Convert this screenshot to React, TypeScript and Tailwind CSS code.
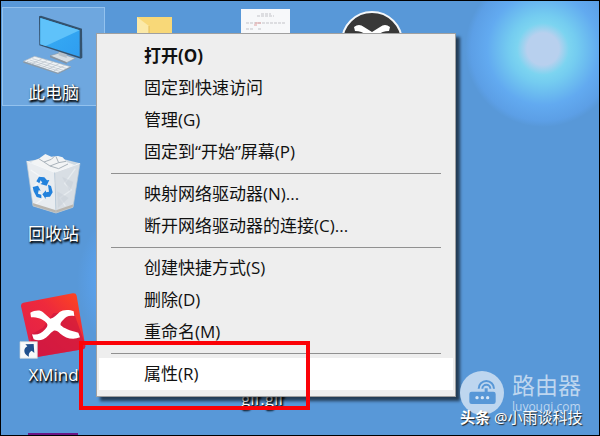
import type { ReactNode } from "react";

interface DesktopIconProps {
  label: string;
  selected?: boolean;
  children: ReactNode;
}

interface MenuItem {
  label: string;
  bold?: boolean;
  active?: boolean;
}

const menuGroups: MenuItem[][] = [
  [
    { label: "打开(O)", bold: true },
    { label: "固定到快速访问" },
    { label: "管理(G)" },
    { label: "固定到“开始”屏幕(P)" },
  ],
  [{ label: "映射网络驱动器(N)..." }, { label: "断开网络驱动器的连接(C)..." }],
  [{ label: "创建快捷方式(S)" }, { label: "删除(D)" }, { label: "重命名(M)" }],
  [{ label: "属性(R)", active: true }],
];

const ComputerIcon = () => (
  <svg viewBox="54 33 216 210" className="h-[70px] w-[72px]" aria-hidden="true">
    <defs>
      <linearGradient id="screen" x1="0" y1="0" x2="1" y2="1">
        <stop offset="0" stopColor="#38b0f4" />
        <stop offset="1" stopColor="#2f9df0" />
      </linearGradient>
    </defs>
    <path d="M150 167l28-8 48 16-26 13z" fill="#d5dde4" stroke="#8a9aa8" strokeWidth="2" />
    <path d="M150 167v5l50 20v-5z" fill="#8793a0" />
    <path d="M176 150l24 8v16l-24-8z" fill="#b5c0ca" />
    <path d="M117 49l6-2 123 39 1 87-5 3-124-40z" fill="#34526e" />
    <path d="M121 54l118 37v79l-118-37z" fill="url(#screen)" />
    <path d="M121 54l118 37-102 47-16-5z" fill="#5fc2fa" />
    <path d="M70 184l34-15 108 31-38 19z" fill="#eef2f5" stroke="#a8b4be" strokeWidth="2" />
    <path d="M70 184v4l104 34 38-19v-3l-38 19z" fill="#8c9aa6" />
    <path
      d="M81 184l101 31M89 180l101 31M97 176l101 29M94 192l31-15M110 197l32-16M127 203l32-17M144 208l33-17M161 213l33-17"
      stroke="#b6c0c8"
      strokeWidth="2"
      fill="none"
    />
  </svg>
);

const RecycleBinIcon = () => (
  <svg viewBox="54 96 216 210" className="h-[70px] w-[72px]" aria-hidden="true">
    <path d="M80 124l82-14 78 20-76 27z" fill="#cfdae3" />
    <path d="M92 126l24-10 20-14 18 8 20-2 14 4 12 14 22 8-24 16-36 8-48-16z" fill="#f2f4f5" />
    <path
      d="M116 116l16 10 22-8 10-10M132 126l18 12 26-10 22-4M176 128l-8-18M150 138l26 8 28-14"
      stroke="#a9b3bb"
      strokeWidth="3"
      fill="none"
    />
    <path d="M80 124l84 33 4 122-69-21z" fill="#e8ecf0" />
    <path d="M164 157l76-27-21 132-51 17z" fill="#d8dee4" />
    <path d="M92 150l36 24-30 30 36 28-30 24" stroke="#f4f6f8" strokeWidth="4" fill="none" />
    <path d="M226 146l-32 44 20 20-34 24 16 24" stroke="#e6ebef" strokeWidth="4" fill="none" />
    <path d="M186 170l34 16-10 28zM172 214l34 20-32 30z" fill="#c9d1d8" opacity=".6" />
    <path d="M98 249l70 22 53-18-2 9-51 18-69-22z" fill="#b9b5ae" />
    <path d="M80 124l84 33 76-27" stroke="#f4f7f9" strokeWidth="3" fill="none" />
    <path d="M80 124l19 134 69 21 51-17 21-132M164 157l4 122" stroke="#bdc8d1" strokeWidth="2" fill="none" />
    <g fill="#2382dc">
      <path d="M109 184l8-14 16 2 8 9 7-1-8 17-19-5 6-4-5-7-4 9z" />
      <path d="M98 201l16-4 8 15-6-1-2 10 10 3v11l-14-4-9-17z" />
      <path d="M144 194l9 4 5 19-8 13-13 1v6l-10-14 11-12v6l9-2z" />
    </g>
  </svg>
);

const XMindIcon = () => (
  <svg viewBox="54 39 216 210" className="h-[70px] w-[72px]" aria-hidden="true">
    <defs>
      <linearGradient id="xmind" x1="0" y1="1" x2="1" y2="0">
        <stop offset="0" stopColor="#e01d4c" />
        <stop offset=".6" stopColor="#ee2a3c" />
        <stop offset="1" stopColor="#ff4a1c" />
      </linearGradient>
    </defs>
    <path d="M70 68l148-28q10-2 12 7l26 151q1 8-7 10l-142 24q-9 1-11-8L63 79q-1-9 7-11z" fill="url(#xmind)" />
    <path d="M92 164l36-20 32-44 60-6 36 100q1 12-7 14l-142 24q-9 1-11-8z" fill="#c4133e" opacity=".55" />
    <path
      d="M91 98c12-7 30-10 38-1l22 19c11-2 20-12 28-20 9-8 30-8 42-2l2 14c-18-3-24 2-33 11-7 7-10 11-8 17 10 9 26 16 53 22l5 14c-22 9-44 2-59-11-8-8-14-11-20-9-12 7-18 20-31 26-9 4-21 4-29 0l-5-15c18 3 28-4 38-14 8-8 11-15 5-21-12-11-25-16-46-16z"
      fill="#fff"
    />
    <path d="M60 185h52v50H60z" fill="#f8f9fa" stroke="#c9d1d8" strokeWidth="2" />
    <path d="M76 193l25-1 2 27-8-7c-8 5-10 11-8 18-12-5-18-17-11-27l6-4z" fill="#20508e" />
  </svg>
);

const PurpleAppIcon = () => (
  <svg viewBox="54 39 216 210" className="h-[70px] w-[72px] overflow-visible" aria-hidden="true">
    <path d="M84 36h150v180H84z" fill="#6b1585" />
  </svg>
);

const FolderIcon = () => (
  <svg viewBox="0 0 36 44" className="absolute left-[136px] top-4 h-11 w-9" aria-hidden="true">
    <path d="M0 0h35v44H0z" fill="#f8d878" />
    <path d="M0 0l12 9v35H0z" fill="#fbe9a8" />
    <path d="M12 9v35" stroke="#e5bd58" />
  </svg>
);

const DocumentIcon = () => (
  <svg viewBox="0 0 49 60" className="absolute left-60 top-2 h-[60px] w-[49px]" aria-hidden="true">
    <path d="M0 0h49v60H0z" fill="#f7f8fa" />
    <path d="M20 5h10M16 7h17M5 14h40M5 20h8M17 20h3" stroke="#c3c3c8" strokeDasharray="3 1" />
    <path d="M14 14h6M13 16h3" stroke="#e2a0a0" />
  </svg>
);

const RoundXIcon = () => (
  <svg viewBox="0 0 62 62" className="absolute left-[340px] top-2.5 size-[62px]" aria-hidden="true">
    <circle cx="31" cy="31" r="30" fill="#383838" stroke="#f4f7fa" strokeWidth="2" />
    <path d="M13 16q5-4 10 0l8 5 8-5q5-4 10 0l-1 4q-7 0-11 4l-6 5-6-5q-4-4-11-4z" fill="#fff" />
  </svg>
);

const RouterIcon = () => (
  <svg viewBox="120 69 132 132" className="size-11 shrink-0" aria-hidden="true">
    <circle cx="186" cy="135" r="66" fill="#bed6ef" />
    <path d="M155 131h39v-10h9v10h17q7 0 7 7v23q0 7-7 7h-65q-7 0-7-7v-23q0-7 7-7z" fill="#5797d7" />
    <g fill="#d6e6f6">
      <circle cx="171" cy="149" r="5" />
      <circle cx="187" cy="149" r="5" />
      <circle cx="203" cy="149" r="5" />
    </g>
    <g fill="none" stroke="#5797d7" strokeWidth="6">
      <path d="M176 122a23 23 0 0 1 46 0" />
      <path d="M187 122a12 12 0 0 1 24 0" />
    </g>
  </svg>
);

const DesktopIcon = ({ label, selected, children }: DesktopIconProps) => (
  <button
    className={`flex w-[103px] flex-col items-center border pt-[3px] ${
      selected ? "border-[#93c2ee] bg-[#6ea7df]" : "border-transparent"
    }`}
  >
    {children}
    <span className="h-6 text-[17px] leading-6 text-white [text-shadow:1px_1px_2px_#000,1px_2px_2px_#000]">
      {label}
    </span>
  </button>
);

const ContextMenu = () => (
  <div
    role="menu"
    className="absolute left-[95px] top-8 w-[360px] border border-[#a0a0a0] bg-[#eeeeee] px-0.5 py-1.5 shadow-[4px_4px_3px_rgba(0,0,0,0.6)]"
  >
    {menuGroups.map((group, index) => (
      <div key={group[0].label}>
        {index > 0 && (
          <div className="flex h-2.5 items-center px-3">
            <hr className="w-full border-t border-[#909090]" />
          </div>
        )}
        {group.map((item) => (
          <button
            key={item.label}
            role="menuitem"
            className={`block h-8 w-full pl-[45px] text-left text-[17px] leading-8 text-[#111] ${
              item.bold ? "font-bold" : ""
            } ${item.active ? "bg-white" : ""}`}
          >
            {item.label}
          </button>
        ))}
      </div>
    ))}
  </div>
);

const Watermark = () => (
  <div className="absolute bottom-2 right-[11px] w-32">
    <div className="flex items-start gap-2">
      <RouterIcon />
      <div className="whitespace-nowrap text-[#bed6ef]">
        <p className="text-[23px] leading-7">路由器</p>
        <p className="text-[12px] leading-4">luyouqi.com</p>
      </div>
    </div>
    <p className="-mt-2 flex gap-1 whitespace-nowrap text-[15px] leading-5 text-white [text-shadow:1px_1px_1px_#222]">
      <b>头条</b>
      <span>@小雨谈科技</span>
    </p>
  </div>
);

export default function App() {
  return (
    <main className="relative h-screen overflow-hidden border border-black bg-[#5898d8] font-['Open_Sans','Noto_Sans_CJK_SC',sans-serif]">
      {/* wallpaper glows */}
      <div className="absolute -top-[30px] left-[464px] size-[156px] rounded-full bg-[radial-gradient(circle,#b8d0ee_0_16px,#7cd4f0_26px,#74ccf0_34px,#62aaf0_56px,#5c9fe6_72px,#5898d8_78px)]" />
      <div className="absolute left-[76px] top-[190px] size-[180px] rounded-full bg-[radial-gradient(circle,#5aa4f4_0_60px,#5898d8_90px)]" />

      <FolderIcon />
      <DocumentIcon />
      <RoundXIcon />

      <nav className="relative flex flex-col items-start gap-[42px] pl-px pt-1.5">
        <DesktopIcon label="此电脑" selected>
          <ComputerIcon />
        </DesktopIcon>
        <DesktopIcon label="回收站">
          <RecycleBinIcon />
        </DesktopIcon>
        <DesktopIcon label="XMind">
          <XMindIcon />
        </DesktopIcon>
        <DesktopIcon label="">
          <PurpleAppIcon />
        </DesktopIcon>
      </nav>

      <span className="absolute left-60 top-[386px] text-[17px] leading-6 text-white [text-shadow:1px_1px_2px_#000,1px_2px_2px_#000]">
        gif.gif
      </span>

      <ContextMenu />
      <Watermark />

      <div className="pointer-events-none absolute left-[78px] top-[340px] h-[69px] w-[231px] border-4 border-[#fb0207]" />
    </main>
  );
}
